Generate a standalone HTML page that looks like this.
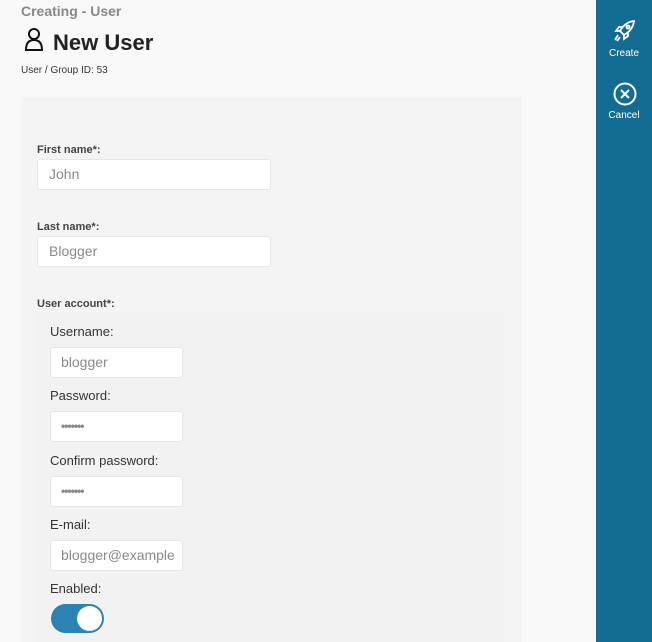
<html><head><style>
body{margin:0;width:652px;height:642px;background:#f9f9f9;font-family:"Liberation Sans",sans-serif;position:relative;overflow:hidden;color:#333}
.a{position:absolute}
.in{position:absolute;background:#fff;border:1px solid #e6e6e6;border-radius:3px;box-sizing:border-box;color:#8a8a8a;font-size:14px;padding-left:10px;line-height:28px}
.lb{position:absolute;font-size:11px;font-weight:bold;color:#444}
.l2{position:absolute;font-size:13px;color:#333}
.pw{font-size:12px;font-weight:bold;letter-spacing:-1px;line-height:29px}
</style></head><body>
<div class="a" style="left:21px;top:3px;font-size:14px;font-weight:bold;color:#888">Creating - User</div>
<svg class="a" style="left:24px;top:27px" width="20" height="25" viewBox="0 0 20 25"><circle cx="10" cy="7" r="5" fill="none" stroke="#111" stroke-width="2"/><path d="M2 23 Q2 13 10 13 Q18 13 18 23 Z" fill="none" stroke="#111" stroke-width="2"/></svg>
<div class="a" style="left:53px;top:30px;font-size:22px;font-weight:bold;color:#222">New User</div>
<div class="a" style="left:21px;top:65px;font-size:10px;color:#333">User / Group ID: 53</div>
<div class="a" style="left:21px;top:97px;width:500px;height:545px;background:#f4f4f4"></div>
<div class="lb" style="left:37px;top:144px">First name*:</div>
<div class="in" style="left:37px;top:159px;width:234px;height:31px;padding-left:11px">John</div>
<div class="lb" style="left:37px;top:221px">Last name*:</div>
<div class="in" style="left:37px;top:236px;width:234px;height:31px;padding-left:11px">Blogger</div>
<div class="lb" style="left:37px;top:298px">User account*:</div>
<div class="a" style="left:37px;top:312px;width:468px;height:330px;background:#f2f2f2"></div>
<div class="l2" style="left:50px;top:324px">Username:</div>
<div class="in" style="left:50px;top:347px;width:133px;height:31px">blogger</div>
<div class="l2" style="left:50px;top:388px">Password:</div>
<div class="in pw" style="left:50px;top:411px;width:133px;height:31px">•••••••</div>
<div class="l2" style="left:50px;top:453px">Confirm password:</div>
<div class="in pw" style="left:50px;top:476px;width:133px;height:31px">•••••••</div>
<div class="l2" style="left:50px;top:517px">E-mail:</div>
<div class="in" style="left:50px;top:540px;width:133px;height:31px;overflow:hidden;white-space:nowrap">blogger@example</div>
<div class="l2" style="left:50px;top:581px">Enabled:</div>
<div class="a" style="left:51px;top:604px;width:53px;height:29px;border-radius:15px;background:#2a83b3"></div>
<div class="a" style="left:77px;top:606px;width:25px;height:25px;border-radius:50%;background:#fff"></div>
<div class="a" style="left:596px;top:0;width:56px;height:642px;background:#136c94"></div>
<svg class="a" style="left:612px;top:18px" width="26" height="26" viewBox="0 0 26 26" fill="none" stroke="#fff" stroke-width="1.8"><path d="M22 3 Q13 4 8 13 L12 17 Q21 12 22 3Z"/><circle cx="16" cy="9" r="1.5"/><path d="M8 13 L4 13 L7 9 L11 9 M12 17 L12 21 L16 18 L16 14 M6 17 L3 22 M8 19 L5 23"/></svg>
<div class="a" style="left:596px;top:48px;width:56px;text-align:center;font-size:10px;color:#fff">Create</div>
<svg class="a" style="left:613px;top:82px" width="24" height="24" viewBox="0 0 24 24" fill="none" stroke="#fff" stroke-width="2"><circle cx="12" cy="12" r="10.5"/><path d="M8 8L16 16M16 8L8 16"/></svg>
<div class="a" style="left:596px;top:110px;width:56px;text-align:center;font-size:10px;color:#fff">Cancel</div>
</body></html>
